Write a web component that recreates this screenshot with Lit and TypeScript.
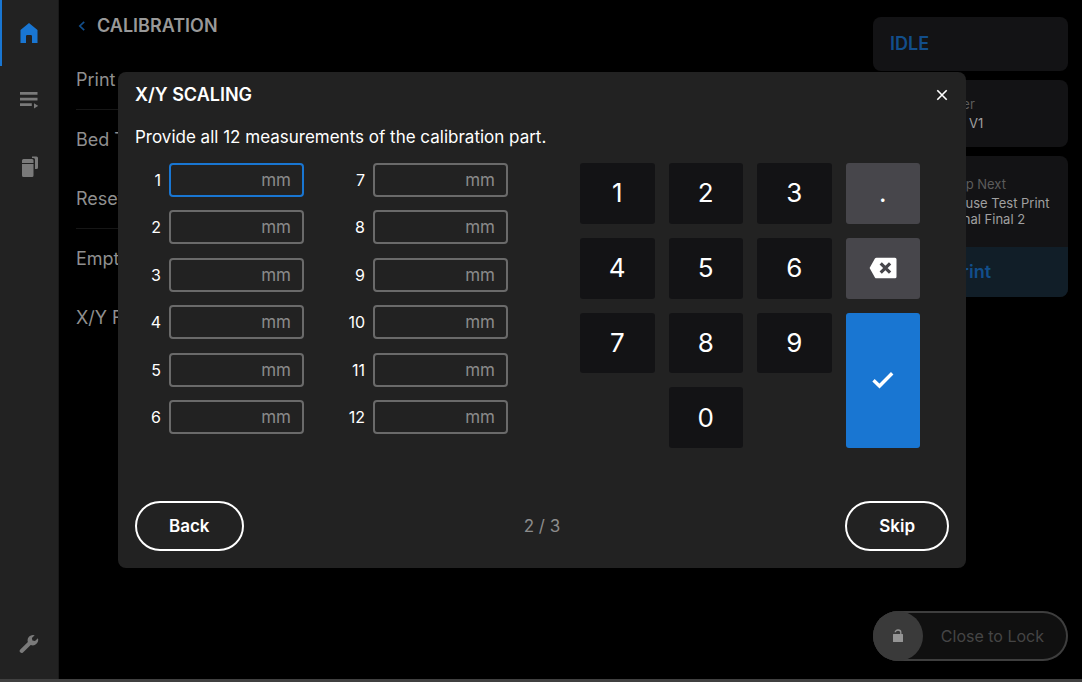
import { LitElement, html, css, svg } from "lit";
import { customElement, property, state } from "lit/decorators.js";
import { classMap } from "lit/directives/class-map.js";

const icons = {
  home: svg`<svg width="18" height="20" viewBox="0 0 18 20" fill="currentColor"><path d="M9 0 17.5 7V20H12V13.2A1.2 1.2 0 0 0 10.800 12H7.200A1.200 1.200 0 0 0 6 13.200V20H0.500V7Z"/></svg>`,
  queue: svg`<svg width="18" height="18" viewBox="0 0 18 18" fill="currentColor"><path d="M0 1h17.500v2.700H0zM0 6.700h17.500v2.700H0zM0 12.300h11.800V15H0zM14 12.200l4.200 2.700L14 17.600z"/></svg>`,
  material: svg`<svg width="18" height="22" viewBox="0 0 18 22" fill="currentColor"><path d="M3.500 3H12a1.500 1.500 0 0 1 1.500 1.500V7H2V4.500A1.500 1.500 0 0 1 3.500 3zM2 8h11.500v11.500A1.500 1.500 0 0 1 12 21H3.500A1.500 1.500 0 0 1 2 19.500zM12 .500h4.500A1.500 1.500 0 0 1 18 2v9.500a1.500 1.500 0 0 1-1.500 1.500H15V3.500A1.500 1.500 0 0 0 13.500 2H12z"/></svg>`,
  wrench: svg`<svg width="20" height="20" viewBox="0 0 20 20" fill="currentColor"><path d="M18.900 4.200 16 7.100 13.400 6.600 12.900 4 15.700 1.200A5.400 5.400 0 0 0 8.900 8.100L1.300 15.600A1.900 1.900 0 0 0 4 18.400L11.700 10.900A5.400 5.400 0 0 0 18.900 4.200Z"/></svg>`,
  chevron: svg`<svg width="8" height="10" viewBox="0 0 8 10" fill="none" stroke="currentColor" stroke-width="1.700"><path d="M6.200 .800 1.800 5l4.400 4.200"/></svg>`,
  close: svg`<svg width="12" height="12" viewBox="0 0 12 12" fill="none" stroke="currentColor" stroke-width="1.600"><path d="m1.300 1.300 9.400 9.400M10.700 1.300l-9.400 9.400"/></svg>`,
  erase: svg`<svg width="28" height="22" viewBox="0 0 28 22"><path fill="currentColor" d="M7.500.700H26a1.500 1.500 0 0 1 1.500 1.500v17.600A1.500 1.500 0 0 1 26 21.300H7.500a2 2 0 0 1-1.600-.900L.600 11l5.300-9.400a2 2 0 0 1 1.600-.900Z"/><path d="m11.700 6.300 9.400 9.400M21.100 6.300l-9.400 9.400" stroke="#47464b" stroke-width="3.200"/></svg>`,
  check: svg`<svg width="22" height="18" viewBox="0 0 22 18" fill="none" stroke="currentColor" stroke-width="3.400"><path d="m1.500 9.300 6 5.700L20.200 2.200"/></svg>`,
  unlock: svg`<svg width="12" height="14" viewBox="0 0 12 14"><path fill="currentColor" d="M1.500 5h9A.500.500 0 0 1 11 5.500v7a.500.500 0 0 1-.500.500h-9a.500.500 0 0 1-.500-.500v-7A.500.500 0 0 1 1.500 5z"/><path d="M3.200 3.200a2.800 2.200 0 0 1 5.600 0V5.500" fill="none" stroke="currentColor" stroke-width="1.300"/></svg>`,
};

const base = css`
  *,
  *::before,
  *::after {
    box-sizing: border-box;
  }
  button,
  input {
    font: inherit;
    color: inherit;
    margin: 0;
  }
  button {
    border: 0;
    padding: 0;
    background: none;
    cursor: pointer;
  }
  svg {
    display: block;
  }
`;

@customElement("side-nav")
class SideNav extends LitElement {
  static styles = [
    base,
    css`
      :host {
        display: block;
        background: #222;
        border-right: 1px solid #191919;
      }
      .nav {
        height: 100%;
        display: flex;
        flex-direction: column;
        gap: 1px;
        padding-bottom: 2px;
      }
      .item {
        height: 66px;
        display: flex;
        align-items: center;
        justify-content: center;
        color: #7a7a7a;
        border-left: 2px solid transparent;
        border-right: 2px solid transparent;
      }
      .active {
        color: #1976d2;
        border-left-color: #1976d2;
      }
      .last {
        margin-top: auto;
      }
    `,
  ];
  render() {
    return html`<nav class="nav" aria-label="Main">
      <a class="item active" href="#home" aria-label="Home">${icons.home}</a>
      <a class="item" href="#queue" aria-label="Queue">${icons.queue}</a>
      <a class="item" href="#materials" aria-label="Materials">${icons.material}</a>
      <a class="item last" href="#settings" aria-label="Settings">${icons.wrench}</a>
    </nav>`;
  }
}

@customElement("status-panel")
class StatusPanel extends LitElement {
  static styles = [
    base,
    css`
      :host {
        display: flex;
        flex-direction: column;
        gap: 9px;
        font-size: 13px;
        line-height: 16px;
        color: #a0a0a0;
      }
      .card {
        background: #131315;
        border-radius: 8px;
        overflow: hidden;
      }
      .state {
        padding: 17px;
        font-size: 18px;
        line-height: 20px;
        font-weight: 600;
        color: #124e8b;
        height: 54px;
      }
      .info {
        padding: 0 17px;
        display: flex;
        gap: 8px;
        align-items: center;
        white-space: nowrap;
      }
      .printer {
        height: 67px;
      }
      .job {
        height: 91px;
      }
      .thumb {
        width: 36px;
        height: 36px;
        border-radius: 4px;
        background: #222;
      }
      .job .thumb {
        width: 48px;
        height: 48px;
      }
      .caption {
        color: #5c5c5c;
        margin-bottom: 3px;
      }
      .job .caption {
        padding-left: 10px;
      }
      .job .second {
        padding-left: 6px;
      }
      .print {
        display: block;
        width: 100%;
        height: 50px;
        background: #111e28;
        color: #124e8b;
        font-size: 18px;
        font-weight: 600;
      }
      .lock {
        margin-top: auto;
        height: 50px;
        border-radius: 25px;
        background: #101010;
        box-shadow: inset 0 0 0 2px #3e3e3e;
        display: flex;
        align-items: center;
        justify-content: space-between;
        padding-right: 24px;
        font-size: 16px;
        color: #454545;
      }
      .knob {
        width: 50px;
        height: 50px;
        border-radius: 50%;
        background: #3a3a3a;
        color: #959595;
        display: grid;
        place-items: center;
      }
    `,
  ];
  render() {
    return html`
      <div class="card state">IDLE</div>
      <div class="card info printer">
        <div class="thumb"></div>
        <div>
          <div class="caption">Printer</div>
          <div>Form V1</div>
        </div>
      </div>
      <div class="card">
        <div class="info job">
          <div class="thumb"></div>
          <div>
            <div class="caption">Up Next</div>
            <div>Mouse Test Print</div>
            <div class="second">Final Final 2</div>
          </div>
        </div>
        <button class="print">Print</button>
      </div>
      <button class="lock"><span class="knob">${icons.unlock}</span>Close to Lock</button>
    `;
  }
}

@customElement("measure-field")
class MeasureField extends LitElement {
  @property({ type: Number }) number = 1;
  @property() value = "";
  @property({ type: Boolean }) selected = false;

  static styles = [
    base,
    css`
      :host {
        display: grid;
        grid-template-columns: 26px 1fr;
        column-gap: 8px;
        align-items: center;
      }
      .label {
        text-align: right;
        white-space: nowrap;
        font-size: 16px;
      }
      .input {
        width: 100%;
        height: 34px;
        border: 2px solid #6a6a6a;
        border-radius: 4px;
        padding: 0 11px;
        background: transparent;
        text-align: right;
        outline: none;
      }
      .selected {
        border-color: #1976d2;
      }
      .input::placeholder {
        color: #8a8a8a;
        opacity: 1;
      }
    `,
  ];
  render() {
    return html`<label class="label" for="field">${this.number}</label>
      <input
        id="field"
        class=${classMap({ input: true, selected: this.selected })}
        placeholder="mm"
        inputmode="decimal"
        .value=${this.value}
      />`;
  }
}

@customElement("key-pad")
class KeyPad extends LitElement {
  static styles = [
    base,
    css`
      :host {
        display: grid;
        grid-template-columns: repeat(4, 1fr);
        grid-template-rows: repeat(4, 1fr);
        grid-template-areas:
          "k1 k2 k3 dot"
          "k4 k5 k6 del"
          "k7 k8 k9 ok"
          ". k0 . ok";
        gap: 14px;
        height: 285px;
        font-size: 26px;
      }
      .key {
        display: grid;
        place-items: center;
        background: #131315;
        border-radius: 3px;
      }
      .alt {
        background: #47464b;
      }
      .ok {
        background: #1976d2;
        grid-area: ok;
      }
      .zero {
        grid-area: k0;
      }
      .dot {
        grid-area: dot;
      }
      .del {
        grid-area: del;
      }
    `,
  ];
  private press(key: string) {
    this.dispatchEvent(new CustomEvent("key", { detail: key }));
  }
  render() {
    return html`
      ${[1, 2, 3, 4, 5, 6, 7, 8, 9].map(
        (n) => html`<button class="key" @click=${() => this.press(String(n))}>${n}</button>`
      )}
      <button class="key zero" @click=${() => this.press("0")}>0</button>
      <button class="key alt dot" @click=${() => this.press(".")}>.</button>
      <button class="key alt del" aria-label="Delete" @click=${() => this.press("del")}>${icons.erase}</button>
      <button class="key ok" aria-label="Confirm" @click=${() => this.press("ok")}>${icons.check}</button>
    `;
  }
}

@customElement("scaling-dialog")
class ScalingDialog extends LitElement {
  @state() private values: string[] = Array(12).fill("");
  @state() private current = 0;

  static styles = [
    base,
    css`
      :host {
        display: flex;
        flex-direction: column;
        background: #222;
        border-radius: 8px;
        padding: 13px 17px 17px;
        color: #fff;
        font-size: 17px;
        line-height: 20px;
      }
      .head {
        display: flex;
        justify-content: space-between;
        align-items: center;
      }
      .title {
        margin: 0;
        font-size: 18px;
        line-height: 20px;
        font-weight: 600;
      }
      .close {
        width: 14px;
        height: 20px;
        display: grid;
        place-items: center;
      }
      .intro {
        margin: 22px 0 16px;
      }
      .body {
        display: flex;
        justify-content: space-between;
        align-items: flex-start;
        padding-right: 29px;
      }
      .fields {
        display: grid;
        grid-template-columns: 169px 169px;
        grid-template-rows: repeat(6, auto);
        grid-auto-flow: column;
        align-content: space-between;
        column-gap: 35px;
        height: 271px;
      }
      .keys {
        width: 340px;
      }
      .foot {
        display: grid;
        grid-template-columns: 1fr auto 1fr;
        align-items: center;
        margin-top: 53px;
      }
      .pill {
        height: 50px;
        padding: 0 32px;
        border: 2px solid #fff;
        border-radius: 25px;
        font-weight: 600;
        justify-self: start;
      }
      .end {
        justify-self: end;
      }
      .step {
        color: #8c8c8c;
      }
    `,
  ];

  private onKey(e: CustomEvent<string>) {
    const key = e.detail;
    if (key === "ok") {
      this.current = (this.current + 1) % 12;
      return;
    }
    this.values = this.values.map((v, i) =>
      i !== this.current ? v : key === "del" ? v.slice(0, -1) : v + key
    );
  }

  render() {
    return html`
      <div class="head">
        <h2 class="title">X/Y SCALING</h2>
        <button class="close" aria-label="Close">${icons.close}</button>
      </div>
      <p class="intro">Provide all 12 measurements of the calibration part.</p>
      <div class="body">
        <div class="fields">
          ${this.values.map(
            (v, i) => html`<measure-field
              .number=${i + 1}
              .value=${v}
              .selected=${i === this.current}
              @click=${() => (this.current = i)}
            ></measure-field>`
          )}
        </div>
        <key-pad class="keys" @key=${this.onKey}></key-pad>
      </div>
      <div class="foot">
        <button class="pill">Back</button>
        <span class="step">2 / 3</span>
        <button class="pill end">Skip</button>
      </div>
    `;
  }
}

@customElement("app-root")
class AppRoot extends LitElement {
  static styles = [
    base,
    css`
      :host {
        display: grid;
        grid-template-columns: 59px 1fr 209px;
        position: relative;
        min-height: 100vh;
        background: #000;
        border-bottom: 3px solid #404040;
        box-sizing: border-box;
        font-family: Inter, Roboto, sans-serif;
      }
      .page {
        padding: 16px 17px 0;
        color: #8f8f8f;
        font-size: 18px;
        line-height: 20px;
      }
      .crumb {
        display: flex;
        align-items: center;
        gap: 11px;
        padding-left: 2px;
        color: #999;
        text-decoration: none;
      }
      .crumb svg {
        color: #124e8b;
      }
      .heading {
        margin: 0;
        font-size: 18px;
        font-weight: 600;
      }
      .list {
        margin: 15px 0 0;
        padding: 0;
        list-style: none;
        display: grid;
        grid-auto-rows: 1fr;
        height: 297px;
      }
      .row {
        display: flex;
        align-items: center;
      }
      .ruled {
        border-bottom: 1px solid #161616;
      }
      .aside {
        margin: 17px 14px 18px 0;
      }
      .dialog {
        position: absolute;
        top: 72px;
        left: 118px;
        right: 116px;
      }
    `,
  ];
  render() {
    const rows = ["Print", "Bed Tilt", "Reset", "Empty", "X/Y Fit"];
    return html`
      <side-nav></side-nav>
      <main class="page">
        <a class="crumb" href="#home">${icons.chevron}<h1 class="heading">CALIBRATION</h1></a>
        <ul class="list">
          ${rows.map(
            (r, i) => html`<li class=${classMap({ row: true, ruled: i === 0 || i === 2 })}>${r}</li>`
          )}
        </ul>
      </main>
      <status-panel class="aside"></status-panel>
      <scaling-dialog class="dialog" role="dialog" aria-label="X/Y scaling"></scaling-dialog>
    `;
  }
}
